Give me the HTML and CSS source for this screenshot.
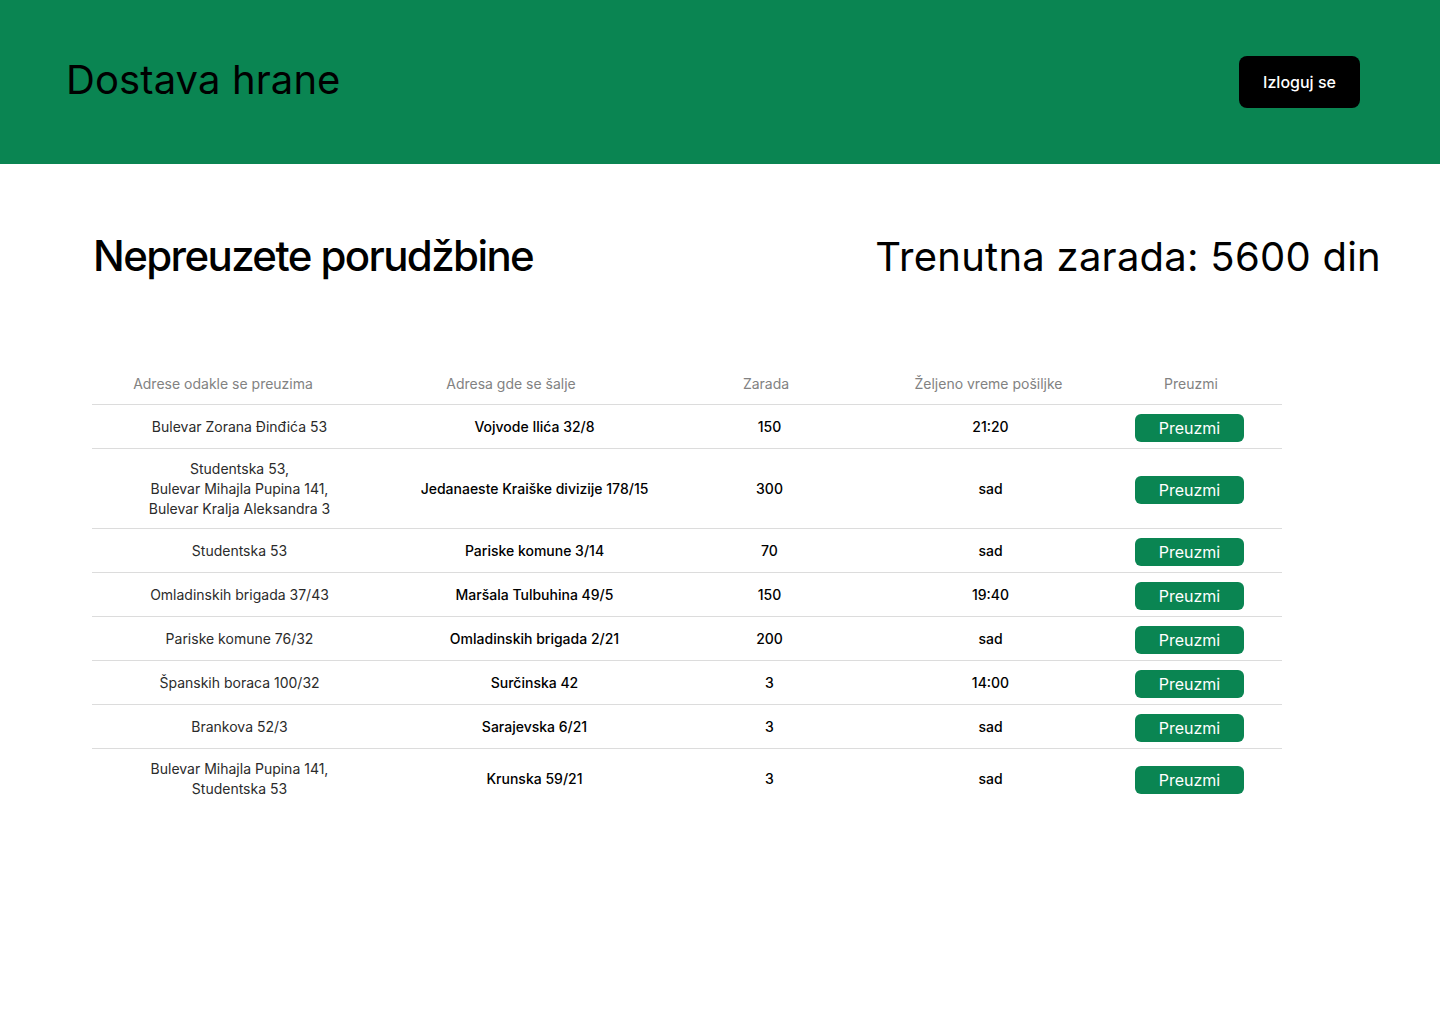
FILE: index.html
```html
<!DOCTYPE html>
<html lang="sr">
<head>
<meta charset="utf-8">
<title>Dostava hrane</title>
<link rel="stylesheet" href="styles.css">
</head>
<body>
<header class="topbar">
  <h1 class="brand">Dostava hrane</h1>
  <button class="logout">Izloguj se</button>
</header>
<main class="content">
  <section class="headline">
    <h2 class="title">Nepreuzete porudžbine</h2>
    <p class="earnings">Trenutna zarada: 5600 din</p>
  </section>
  <div class="table">
    <div class="row head">
      <div class="cell c1">Adrese odakle se preuzima</div>
      <div class="cell c2">Adresa gde se šalje</div>
      <div class="cell c3">Zarada</div>
      <div class="cell c4">Željeno vreme pošiljke</div>
      <div class="cell c5">Preuzmi</div>
    </div>
    <div class="row">
      <div class="cell c1">Bulevar Zorana Đinđića 53</div>
      <div class="cell c2">Vojvode Ilića 32/8</div>
      <div class="cell c3">150</div>
      <div class="cell c4">21:20</div>
      <div class="cell c5"><button class="take">Preuzmi</button></div>
    </div>
    <div class="row">
      <div class="cell c1">Studentska 53,<br>Bulevar Mihajla Pupina 141,<br>Bulevar Kralja Aleksandra 3</div>
      <div class="cell c2">Jedanaeste Kraiške divizije 178/15</div>
      <div class="cell c3">300</div>
      <div class="cell c4">sad</div>
      <div class="cell c5"><button class="take">Preuzmi</button></div>
    </div>
    <div class="row">
      <div class="cell c1">Studentska 53</div>
      <div class="cell c2">Pariske komune 3/14</div>
      <div class="cell c3">70</div>
      <div class="cell c4">sad</div>
      <div class="cell c5"><button class="take">Preuzmi</button></div>
    </div>
    <div class="row">
      <div class="cell c1">Omladinskih brigada 37/43</div>
      <div class="cell c2">Maršala Tulbuhina 49/5</div>
      <div class="cell c3">150</div>
      <div class="cell c4">19:40</div>
      <div class="cell c5"><button class="take">Preuzmi</button></div>
    </div>
    <div class="row">
      <div class="cell c1">Pariske komune 76/32</div>
      <div class="cell c2">Omladinskih brigada 2/21</div>
      <div class="cell c3">200</div>
      <div class="cell c4">sad</div>
      <div class="cell c5"><button class="take">Preuzmi</button></div>
    </div>
    <div class="row">
      <div class="cell c1">Španskih boraca 100/32</div>
      <div class="cell c2">Surčinska 42</div>
      <div class="cell c3">3</div>
      <div class="cell c4">14:00</div>
      <div class="cell c5"><button class="take">Preuzmi</button></div>
    </div>
    <div class="row">
      <div class="cell c1">Brankova 52/3</div>
      <div class="cell c2">Sarajevska 6/21</div>
      <div class="cell c3">3</div>
      <div class="cell c4">sad</div>
      <div class="cell c5"><button class="take">Preuzmi</button></div>
    </div>
    <div class="row last">
      <div class="cell c1">Bulevar Mihajla Pupina 141,<br>Studentska 53</div>
      <div class="cell c2">Krunska 59/21</div>
      <div class="cell c3">3</div>
      <div class="cell c4">sad</div>
      <div class="cell c5"><button class="take">Preuzmi</button></div>
    </div>
  </div>
</main>
</body>
</html>
```

FILE: styles.css
```css
* { box-sizing: border-box; }
html, body { margin: 0; padding: 0; background: #ffffff; }
body { font-family: Inter, "Noto Sans", sans-serif; color: #000; }

.topbar {
  height: 164px;
  background: #0a8552;
  display: flex;
  justify-content: space-between;
  align-items: center;
  padding: 0 80px 0 66px;
}
.brand {
  margin: 0 0 3px 0;
  font-size: 40px;
  font-weight: 400;
  line-height: 1.21;
  letter-spacing: 0.1px;
  color: #000;
}
.logout {
  font-family: inherit;
  font-size: 16px;
  line-height: 20px;
  font-weight: 500;
  color: #fff;
  background: #000;
  border: none;
  border-radius: 8px;
  padding: 16px 24px;
  width: 121px;
  height: 52px;
}

.content { padding: 0 59px 0 92px; }
.headline {
  display: flex;
  justify-content: space-between;
  align-items: baseline;
  padding-top: 67px;
}
.title {
  margin: 0 0 0 1px;
  font-size: 42px;
  font-weight: 500;
  line-height: 1.21;
  letter-spacing: -1.6px;
}
.earnings {
  margin: 0;
  font-size: 40px;
  font-weight: 400;
  line-height: 1.21;
  letter-spacing: 0.25px;
}

.table {
  width: 1190px;
  margin-top: 82px;
  font-size: 14px;
  line-height: 20px;
}
.row {
  display: grid;
  grid-template-columns: 295px 295px 175px 267px 158px;
  border-bottom: 1px solid #dcdcdc;
}
.row.last { border-bottom: none; }
.cell {
  display: flex;
  align-items: center;
  justify-content: center;
  text-align: center;
  padding: 10px 0 9px 0;
}
.c1 { color: #2b2b2b; font-weight: 400; }
.c2, .c3, .c4 { color: #000; font-weight: 500; }
.c5 { padding: 5px 27px 6px 0; }

.head .cell {
  color: #828282;
  font-weight: 400;
  padding-top: 10px;
  padding-bottom: 10px;
}
.head .c1 { padding-right: 33px; }
.head .c2 { padding-right: 47px; }
.head .c3 { padding-right: 7px; }
.head .c4 { padding-right: 4px; }
.head .c5 { padding-right: 24px; }

.take {
  font-family: inherit;
  font-size: 16px;
  line-height: 20px;
  font-weight: 400;
  color: #fff;
  background: #0a8552;
  border: none;
  border-radius: 6px;
  width: 109px;
  height: 28px;
  padding: 0;
  margin-top: 4px;
}
```
